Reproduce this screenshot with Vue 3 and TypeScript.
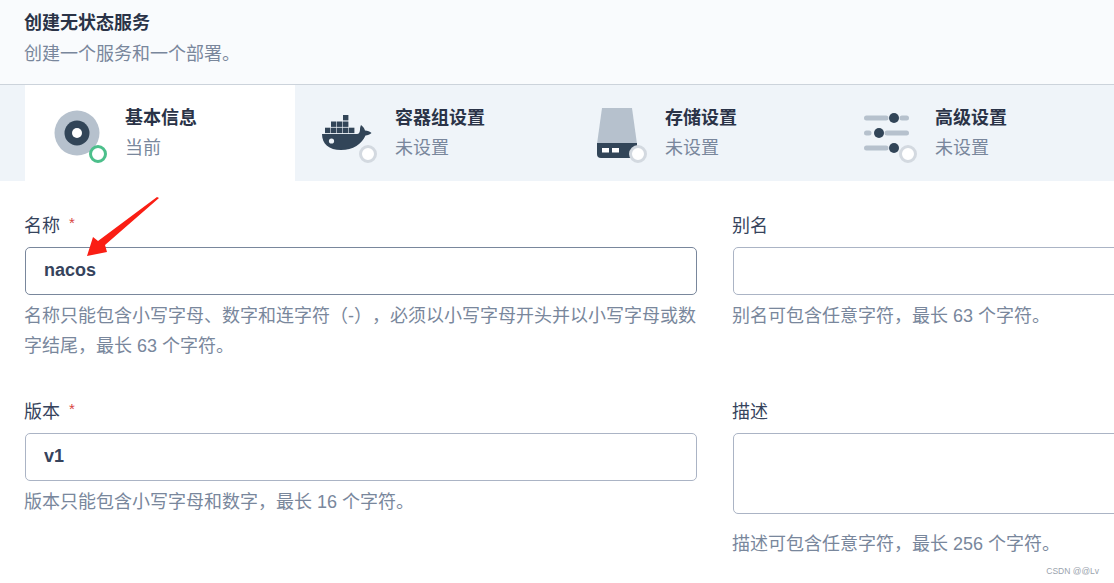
<script setup lang="ts">
const tabs = [
  { key: 'basic', title: '基本信息', status: '当前' },
  { key: 'container', title: '容器组设置', status: '未设置' },
  { key: 'storage', title: '存储设置', status: '未设置' },
  { key: 'advanced', title: '高级设置', status: '未设置' },
]

const dockerBoxes = [
  [23, 12],
  [11, 18.5], [17, 18.5], [23, 18.5],
  [5, 24.7], [11, 24.7], [17, 24.7], [23, 24.7], [29, 24.7],
]
</script>

<template>
  <div class="page">
    <header class="head">
      <h1>创建无状态服务</h1>
      <p>创建一个服务和一个部署。</p>
    </header>

    <nav class="tabs">
      <div v-for="(tab, i) in tabs" :key="tab.key" class="tab" :class="{ active: i === 0 }">
        <div class="tab-icon">
          <svg v-if="tab.key === 'basic'" width="60" height="60" viewBox="0 0 60 60">
            <circle cx="27" cy="30" r="22.5" fill="#b6c1cd" />
            <circle cx="27" cy="30" r="12.5" fill="#324558" />
            <circle cx="27" cy="30" r="5" fill="#fff" />
          </svg>
          <svg v-else-if="tab.key === 'container'" width="60" height="60" viewBox="0 0 60 60">
            <rect
              v-for="(b, n) in dockerBoxes"
              :key="n"
              :x="b[0]"
              :y="b[1]"
              width="5.4"
              height="5.4"
              fill="#324558"
            />
            <path
              d="M2 31H37C39 31 40 29 40 26.500C40 25 40.500 23 41 22C43 23.500 44.500 25.500 45 27.500C47.500 27.500 50 28.500 51.500 30C50 31.500 47.500 32.500 45.500 32.500C42 41 33 47 21 47C9 47 2 41 2 31Z"
              fill="#324558"
            />
            <circle cx="11.500" cy="38" r="2.600" fill="#eff4f9" />
          </svg>
          <svg v-else-if="tab.key === 'storage'" width="60" height="60" viewBox="0 0 60 60">
            <path d="M12 5H42L47 41H7Z" fill="#b6c1cd" />
            <path d="M7 40H47V51A4 4 0 0 1 43 55H11A4 4 0 0 1 7 51Z" fill="#324558" />
            <rect x="12" y="45" width="7" height="4.500" fill="#fff" />
            <rect x="22" y="45" width="7" height="4.500" fill="#fff" />
          </svg>
          <svg v-else width="60" height="60" viewBox="0 0 60 60">
            <g stroke="#b6c1cd" stroke-width="5" stroke-linecap="round">
              <path d="M6.500 15H26M42 15H46.500" />
              <path d="M6.500 30H9M27 30H46.500" />
              <path d="M6.500 45H26" />
            </g>
            <circle cx="34" cy="15" r="5" fill="#324558" />
            <circle cx="19" cy="30" r="5" fill="#324558" />
            <circle cx="34" cy="45" r="5" fill="#324558" />
          </svg>
          <span class="ring"></span>
        </div>
        <div class="tab-text">
          <div class="tab-title">{{ tab.title }}</div>
          <div class="tab-status">{{ tab.status }}</div>
        </div>
      </div>
    </nav>

    <form class="form">
      <div class="field">
        <label>名称<em>*</em></label>
        <input class="focused" value="nacos" readonly />
        <p class="help">名称只能包含小写字母、数字和连字符（-），必须以小写字母开头并以小写字母或数字结尾，最长 63 个字符。</p>
      </div>
      <div class="field">
        <label>别名</label>
        <input readonly />
        <p class="help">别名可包含任意字符，最长 63 个字符。</p>
      </div>
      <div class="field">
        <label>版本<em>*</em></label>
        <input value="v1" readonly />
        <p class="help">版本只能包含小写字母和数字，最长 16 个字符。</p>
      </div>
      <div class="field">
        <label>描述</label>
        <textarea readonly></textarea>
        <p class="help area-help">描述可包含任意字符，最长 256 个字符。</p>
      </div>
    </form>

    <svg class="arrow" width="80" height="66" viewBox="0 0 80 66">
      <path d="M2 60L8 41L13 45L72 1L74 2L20 49L22 56Z" fill="#fa1e14" />
    </svg>
    <span class="mark">CSDN @@Lv</span>
  </div>
</template>

<style>
html,
body {
  margin: 0;
  background: #fff;
}
</style>

<style scoped>
.page {
  position: relative;
  width: 1114px;
  height: 583px;
  overflow: hidden;
  font-family: "Liberation Sans", "Noto Sans CJK SC", sans-serif;
  font-size: 18px;
  color: #2a3347;
  text-spacing-trim: space-all;
}

.head {
  height: 84px;
  padding-left: 24px;
  background: #f9fbfd;
  border-bottom: 1px solid #ccd3db;
}

.head h1 {
  margin: 0;
  padding-top: 9px;
  font-size: 18px;
  line-height: 28px;
  font-weight: 700;
}

.head p {
  margin: 2px 0 0;
  line-height: 30px;
  color: #79879c;
}

.tabs {
  display: flex;
  height: 96px;
  padding-left: 25px;
  background: #eff4f9;
}

.tab {
  display: flex;
  align-items: center;
  flex: 0 0 270px;
  padding-left: 25px;
  box-sizing: border-box;
}

.tab.active {
  background: #fff;
}

.tab-icon {
  position: relative;
  width: 60px;
  height: 60px;
  margin-right: 15px;
}

.tab-icon svg {
  display: block;
}

.ring {
  position: absolute;
  left: 39px;
  top: 42px;
  width: 12px;
  height: 12px;
  border: 3px solid #d3d9e0;
  border-radius: 50%;
  background: #fff;
}

.active .ring {
  border-color: #4cbf8b;
}

.tab-title {
  font-weight: 700;
  line-height: 30px;
}

.tab-status {
  line-height: 30px;
  color: #79879c;
}

.form {
  display: grid;
  grid-template-columns: 672px 672px;
  column-gap: 36px;
  padding: 30px 0 0 25px;
}

.field {
  display: flex;
  flex-direction: column;
  min-height: 186px;
}

.field label {
  height: 30px;
  line-height: 30px;
  color: #36435c;
  margin: 0 0 6px -1px;
}

.field em {
  margin-left: 9px;
  color: #d8453f;
  font-style: normal;
  font-size: 15px;
  line-height: 0;
  vertical-align: 4px;
}

.field input,
.field textarea {
  display: block;
  box-sizing: border-box;
  width: 100%;
  height: 48px;
  padding: 0 18px 2px;
  border: 1px solid #abb4c5;
  border-radius: 5px;
  background: #fff;
  font-family: inherit;
  font-size: 18px;
  font-weight: 700;
  color: #36435c;
  outline: none;
  resize: none;
}

.field textarea {
  height: 81px;
}

.field input.focused {
  border-color: #79879c;
}

.help {
  margin: 6px 0 0 -1px;
  line-height: 30px;
  color: #79879c;
}

.help.area-help {
  margin-top: 15px;
}

.arrow {
  position: absolute;
  left: 85px;
  top: 196px;
}

.mark {
  position: absolute;
  right: 15px;
  top: 566px;
  font-size: 8.5px;
  color: #9aa3ad;
}
</style>
